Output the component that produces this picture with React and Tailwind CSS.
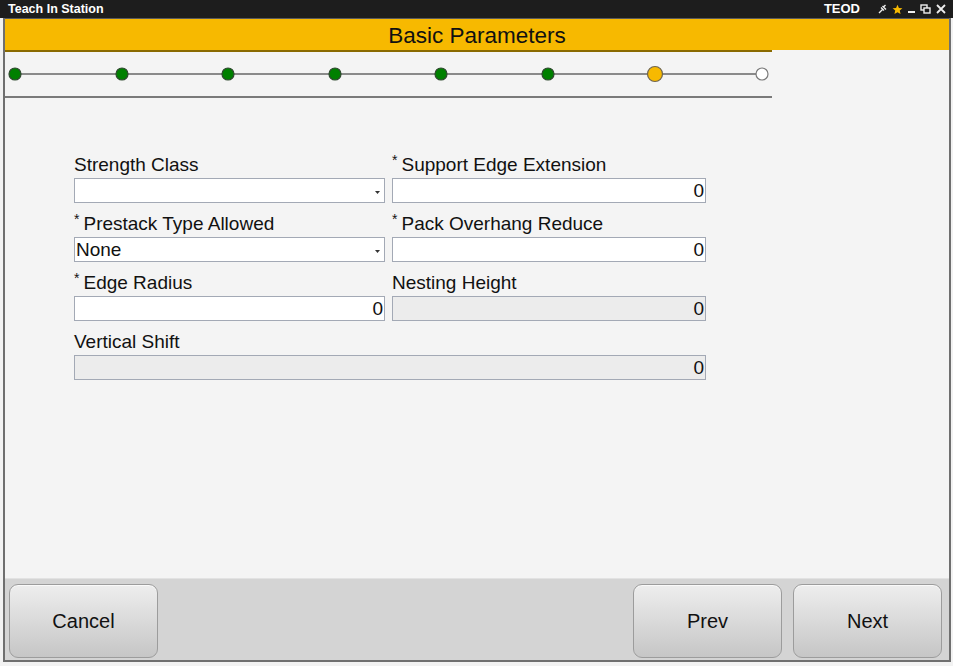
import React from 'react';

const font = { fontFamily: '"Liberation Sans", Arial, sans-serif' };

const steps = [10, 117, 223, 330, 436, 543, 650, 757];

const Stepper = () => (
  <svg width="767" height="44" viewBox="0 0 767 44" className="block">
    <line x1="10" y1="22" x2="757" y2="22" stroke="#8a8a8a" strokeWidth="2" />
    {steps.map((x, i) => {
      if (i === 6) return <circle key={i} cx={x} cy="22" r="7.5" fill="#f7b900" stroke="#6f6550" strokeWidth="1.2" />;
      if (i === 7) return <circle key={i} cx={x} cy="22" r="6" fill="#ffffff" stroke="#7a7a7a" strokeWidth="1.2" />;
      return <circle key={i} cx={x} cy="22" r="6" fill="#008000" stroke="#2f4a2f" strokeWidth="1.2" />;
    })}
  </svg>
);

const Label = ({ children, required }) => (
  <div className="h-[22px] leading-[22px] text-[19px] text-[#111] whitespace-nowrap">
    {required && <span className="text-[14px] align-top leading-[13px] mr-[4px]">*</span>}
    {children}
  </div>
);

const Field = ({ label, required, value = '', disabled, select, className = '' }) => (
  <div className={className}>
    <Label required={required}>{label}</Label>
    <div
      className={`mt-[2px] h-[25px] border border-[#a3a9b5] flex items-center text-[19px] text-[#111] leading-none ${
        disabled ? 'bg-[#ececec]' : 'bg-white'
      } ${select ? 'justify-between pl-[1px] pr-[4px]' : 'justify-end pr-[1px]'}`}
    >
      {select ? (
        <>
          <span>{value}</span>
          <svg width="5" height="3" viewBox="0 0 5 3" className="mt-[3px]">
            <path d="M0 0 L5 0 L2.5 3 Z" fill="#333" />
          </svg>
        </>
      ) : (
        <span>{value}</span>
      )}
    </div>
  </div>
);

const Btn = ({ children }) => (
  <button className="w-[149px] h-[74px] rounded-[9px] border border-[#9c9c9c] bg-gradient-to-b from-[#eeeeee] to-[#c6c6c6] text-[20px] text-[#111] shadow-[inset_0_1px_0_#fafafa]">
    {children}
  </button>
);

export default function App() {
  return (
    <div style={font} className="w-[953px] h-[666px] bg-[#f2f2f2] flex flex-col overflow-hidden">
      {/* title bar */}
      <div className="h-[18px] bg-[#1d1d1d] flex items-center pl-[8px] pr-[7px] text-white">
        <span className="text-[12.5px] font-bold">Teach In Station</span>
        <span className="ml-auto text-[13px] font-bold mr-[18px]">TEOD</span>
        <div className="flex items-center gap-[5px]">
          <svg width="9" height="10" viewBox="0 0 9 10">
            <path d="M1 9 L4.5 5.5 M3 3.5 L6 6.5 M4.5 2 L8 5.5 M5.5 3 L7.5 1" stroke="#eee" strokeWidth="1.4" fill="none" />
          </svg>
          <svg width="11" height="11" viewBox="0 0 24 24">
            <path d="M12 1.5l3.1 7.2 7.6.6-5.8 5 1.8 7.5L12 17.8l-6.7 4 1.8-7.5-5.8-5 7.6-.6z" fill="#f7b900" />
          </svg>
          <svg width="7" height="10" viewBox="0 0 7 10">
            <rect x="0" y="7" width="7" height="2" fill="#eee" />
          </svg>
          <svg width="11" height="10" viewBox="0 0 11 10">
            <rect x="1" y="1" width="6" height="5" stroke="#eee" strokeWidth="1.4" fill="none" />
            <rect x="4" y="4" width="6" height="5" stroke="#eee" strokeWidth="1.4" fill="#1d1d1d" />
          </svg>
          <svg width="10" height="10" viewBox="0 0 10 10">
            <path d="M1 1 L9 9 M9 1 L1 9" stroke="#eee" strokeWidth="1.8" />
          </svg>
        </div>
      </div>

      {/* window body */}
      <div className="flex-1 ml-[3px] mr-[2px] mb-[4px] border-x-2 border-b-2 border-[#6f6f6f] bg-[#f4f4f4] flex flex-col">
        <div className="h-[32px] border-t border-[#5a5a5a] bg-[#f7b900] flex items-center justify-center pt-[3px]">
          <span className="text-[22.5px] text-[#111]">Basic Parameters</span>
        </div>
        <div className="w-[767px] h-[48px] border-t-2 border-b-2 border-t-[#8a6a00] border-b-[#7a7a7a]">
          <Stepper />
        </div>

        <div className="flex-1 pl-[69px] pt-[56px]">
          <div className="grid grid-cols-[311px_314px] gap-x-[7px] gap-y-[10px]">
            <Field label="Strength Class" select />
            <Field label="Support Edge Extension" required value="0" />
            <Field label="Prestack Type Allowed" required select value="None" />
            <Field label="Pack Overhang Reduce" required value="0" />
            <Field label="Edge Radius" required value="0" />
            <Field label="Nesting Height" value="0" disabled />
            <Field label="Vertical Shift" value="0" disabled className="col-span-2" />
          </div>
        </div>

        <div className="h-[82px] bg-[#d4d4d4] border-t border-[#e2e2e2] flex items-start pt-[5px] pl-[4px] pr-[7px]">
          <Btn>Cancel</Btn>
          <div className="ml-auto flex gap-[11px]">
            <Btn>Prev</Btn>
            <Btn>Next</Btn>
          </div>
        </div>
      </div>
    </div>
  );
}
